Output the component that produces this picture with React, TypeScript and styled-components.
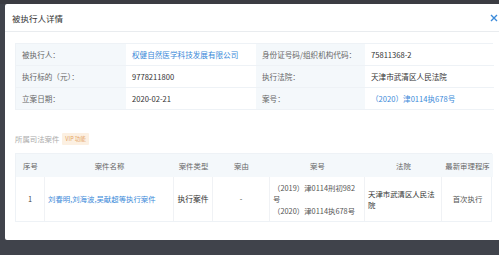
import React from 'react'
import styled, { createGlobalStyle } from 'styled-components'

const GlobalStyle = createGlobalStyle`
  html, body {
    margin: 0;
    padding: 0;
    width: 499px;
    height: 255px;
    overflow: hidden;
    background: linear-gradient(to bottom, #3b3c42 0, #3b3c42 4px, #40434b 4px);
    font-family: "Noto Sans CJK SC", "Noto Sans", sans-serif;
  }
`

const Backdrop = styled.div`
  height: 255px;
  padding: 4px 0 0 5px;
  box-sizing: border-box;
`

const Modal = styled.div`
  width: 494px;
  height: 236px;
  background: #fff;
  border-radius: 2px 0 0 2px;
  display: flex;
  flex-direction: column;
`

const Header = styled.div`
  height: 28px;
  border-bottom: 1px solid #e9ecef;
  display: flex;
  align-items: center;
  justify-content: space-between;
  padding: 0 0 0 7px;
  box-sizing: border-box;
`

const Title = styled.div`
  font-size: 8.5px;
  color: #333;
`

const Close = styled.span`
  display: flex;
  color: #3b8ad9;
  cursor: pointer;
`

const Body = styled.div`
  padding: 11px 6px 0 10px;
`

const InfoGrid = styled.div`
  display: grid;
  grid-template-columns: 110px 130px 109px 129px;
  grid-auto-rows: 22px;
  border: 1px solid #eef2f6;
  border-bottom: none;
`

const InfoCell = styled.div<{ $label?: boolean }>`
  display: flex;
  align-items: center;
  padding-left: 6px;
  font-size: 7.6px;
  color: ${p => (p.$label ? '#666' : '#333')};
  background: ${p => (p.$label ? '#f4f8fb' : '#fff')};
  border-bottom: 1px solid #eef2f6;
`

const Link = styled.span`
  color: #3b8ad9;
`

const SectionTitle = styled.div`
  margin-top: 22px;
  height: 13px;
  display: flex;
  align-items: center;
  gap: 3px;
  font-size: 7.4px;
  color: #aaa;
`

const Vip = styled.span`
  background: #fcf0e2;
  color: #e4a463;
  font-size: 5.5px;
  padding: 2px 3px;
  border-radius: 1px;
`

const CaseTable = styled.div`
  margin-top: 8px;
  display: grid;
  grid-template-columns: 29px 129px 39px 57px 95px 77px 51px;
  grid-template-rows: 23px 44px;
  border: 1px solid #eef2f6;
  width: 477px;
  box-sizing: border-box;
`

const Th = styled.div`
  display: flex;
  align-items: center;
  justify-content: center;
  background: #f4f8fb;
  font-size: 7.4px;
  color: #666;
`

const Td = styled.div<{ $align?: string; $color?: string; $size?: number }>`
  display: flex;
  align-items: center;
  justify-content: ${p => p.$align || 'center'};
  padding: 0 3px;
  font-size: ${p => p.$size || 7.4}px;
  line-height: 11.5px;
  color: ${p => p.$color || '#444'};
  border-right: 1px solid #f0f2f5;
  &:last-child {
    border-right: none;
  }
`

const Lines = styled.div`
  text-align: left;
  word-break: break-all;
`

const infoRows = [
  ['被执行人：', '权健自然医学科技发展有限公司', '身份证号码/组织机构代码：', '75811368-2'],
  ['执行标的（元）：', '9778211800', '执行法院：', '天津市武清区人民法院'],
  ['立案日期：', '2020-02-21', '案号：', '（2020）津0114执678号'],
]

const heads = ['序号', '案件名称', '案件类型', '案由', '案号', '法院', '最新审理程序']

export default function App() {
  return (
    <>
      <GlobalStyle />
      <Backdrop>
        <Modal>
          <Header>
            <Title>被执行人详情</Title>
            <Close>
              <svg width="10" height="10" viewBox="0 0 10 10">
                <path d="M2 2 L8 8 M8 2 L2 8" stroke="#3b8ad9" strokeWidth="1.4" />
              </svg>
            </Close>
          </Header>
          <Body>
            <InfoGrid>
              {infoRows.map((r, i) => (
                <React.Fragment key={i}>
                  <InfoCell $label>{r[0]}</InfoCell>
                  <InfoCell>{i === 0 ? <Link>{r[1]}</Link> : r[1]}</InfoCell>
                  <InfoCell $label>{r[2]}</InfoCell>
                  <InfoCell>{i === 2 ? <Link>{r[3]}</Link> : r[3]}</InfoCell>
                </React.Fragment>
              ))}
            </InfoGrid>
            <SectionTitle>
              所属司法案件<Vip>VIP 功能</Vip>
            </SectionTitle>
            <CaseTable>
              {heads.map(h => (
                <Th key={h}>{h}</Th>
              ))}
              <Td>1</Td>
              <Td $align="flex-start" $color="#3b8ad9">刘春明,刘海波,吴献超等执行案件</Td>
              <Td $color="#333" $size={7.8}>执行案件</Td>
              <Td>-</Td>
              <Td $color="#555">
                <Lines>
                  （2019）津0114刑初982号
                  <br />
                  （2020）津0114执678号
                </Lines>
              </Td>
              <Td $align="flex-start" $color="#333">
                <Lines>天津市武清区人民法院</Lines>
              </Td>
              <Td $color="#555">首次执行</Td>
            </CaseTable>
          </Body>
        </Modal>
      </Backdrop>
    </>
  )
}
